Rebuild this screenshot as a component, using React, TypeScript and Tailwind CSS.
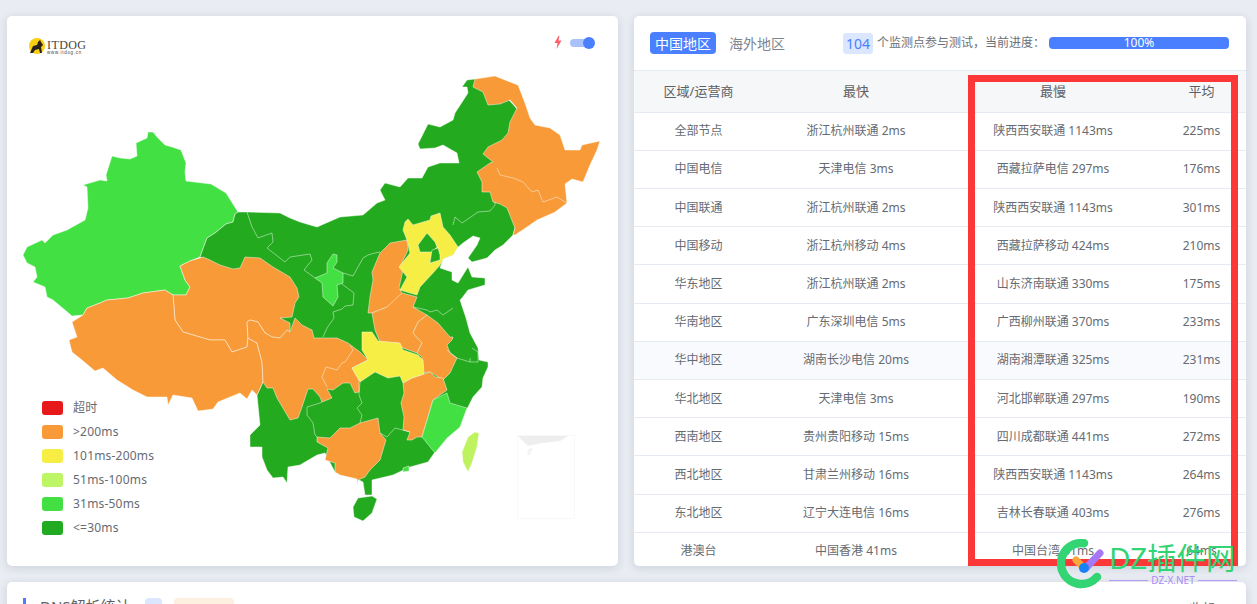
import React from 'react';

const GREEN = '#24aa1f';
const ORANGE = '#f79a37';
const YELLOW = '#f7ee45';
const LIGHT = '#43e043';

const xinjiang = '148,132 153,132 157,137 165,145 172,147 181,150 186,163 185,172 186,181 211,184 226,193 238,212 235,214 233,222 226,224 215,233 207,238 200,257 190,261 180,266 185,280 190,287 186,295 173,295 165,290 143,293 128,298 107,300 100,303 87,308 83,315 72,316 65,310 53,300 47,297 45,287 33,282 37,277 35,267 27,263 23,255 27,247 42,240 45,243 53,235 67,230 85,220 88,208 87,187 83,185 100,180 107,181 106,175 112,156 120,158 130,159 137,156 136,143 147,138';

const mainland = '238,212 247,212 280,213 290,218 300,222 317,227 340,217 363,215 377,203 385,200 380,190 385,183 400,187 408,178 422,178 428,167 440,163 459,163 457,153 443,145 435,148 420,149 418,144 428,124 440,127 453,120 455,113 468,93 467,87 462,87 467,80 475,79 500,90 518,110 515,228 513,235 503,245 495,250 487,258 472,262 468,258 477,245 480,238 473,236 463,243 457,248 453,255 443,259 440,268 452,272 452,280 458,283 468,267 472,277 485,278 485,285 468,290 462,298 460,300 466,318 470,333 478,348 479,360 488,362 488,367 483,378 482,387 473,397 468,407 465,412 460,427 447,438 435,452 428,462 410,467 393,475 372,480 372,495 365,495 363,482 355,478 335,472 325,453 317,455 300,465 288,467 287,483 283,477 273,478 267,470 262,457 262,447 250,447 250,435 260,425 257,395 263,382 270,300 200,257 207,238 215,233 226,224 233,222 235,214';

const qinghai = '180,266 190,261 203,257 210,260 220,265 233,269 240,268 245,257 260,258 273,267 290,277 297,288 299,297 295,303 292,317 280,318 290,323 290,332 287,330 280,338 272,337 265,333 258,322 250,320 247,322 248,338 247,347 232,352 225,340 210,340 183,332 175,320 173,295 186,295 190,287 185,280';

const tibet = '173,295 175,320 183,332 210,340 225,340 232,352 247,347 248,338 257,343 262,362 263,382 257,395 252,390 247,399 240,393 218,402 213,409 198,411 192,398 173,395 168,405 167,397 147,397 133,390 117,380 103,368 95,371 82,360 72,352 69,340 77,337 72,322 83,315 87,308 100,303 107,300 128,298 143,293 165,290';

const sichuan = '248,338 247,322 250,320 258,322 265,333 272,337 280,338 287,330 290,332 295,318 302,325 312,330 314,338 323,338 337,338 348,343 360,352 368,360 352,368 359,380 359,392 355,393 350,383 343,383 333,390 327,389 332,398 322,402 320,397 313,389 308,389 302,407 298,418 290,420 277,398 273,388 267,388 263,382 262,362 257,343';

const heilongjiang = '475,79 495,76 510,82 518,85 525,103 530,118 535,125 550,128 560,135 565,150 580,150 582,145 600,141 597,150 590,165 583,182 572,179 565,184 567,203 555,212 553,213 537,220 527,227 515,235 513,235 515,228 507,208 500,204 493,202 490,192 482,192 482,182 477,172 490,163 493,162 483,154 488,147 502,140 508,133 510,122 517,108 510,100 500,104 488,105 483,92 473,87';

const shanxi = '407,240 390,243 380,253 372,272 373,280 370,297 368,313 372,313 387,307 400,300 402,293 399,288 403,270 400,267 408,250';
const henan = '372,313 387,307 402,293 417,297 413,307 427,315 418,322 413,333 422,343 417,353 403,348 398,343 380,342 375,330';
const anhui = '427,315 438,323 450,337 453,337 452,340 447,345 450,353 457,358 450,373 443,380 435,375 430,372 422,373 423,367 422,357 417,353 422,343 413,333 418,322';
const jiangxi = '403,383 412,378 424,374 430,372 435,377 443,378 447,390 433,400 428,417 422,437 417,437 412,440 407,440 410,432 403,430 404,417 401,403 404,393';
const guangxi = '317,437 330,438 340,428 350,428 360,423 378,418 380,433 386,440 383,450 380,460 370,470 365,477 358,480 358,485 357,479 340,475 335,472 335,463 325,460 328,448 317,442';
const hebei = '403,230 405,222 408,219 413,225 430,220 431,216 440,213 443,227 450,235 458,247 453,255 443,259 440,265 433,273 420,287 417,295 400,290 407,277 399,267 410,253 407,240';
const hubei = '362,332 372,332 378,341 400,343 403,350 418,355 423,360 424,374 412,378 403,383 400,376 388,378 375,372 360,382 352,368 368,360 362,350';
const beijing = '418,245 427,233 435,242 437,247 432,252 420,252';
const tianjin = '430,263 440,260 440,255 438,248 432,250';
const ningxia = '315,278 327,273 327,263 333,254 337,255 337,262 333,268 343,273 343,283 337,285 338,297 333,306 323,297 322,283';
const fujian = '433,400 447,393 450,403 467,408 460,427 447,438 435,453 422,437 428,417';
const taiwan = '475,432 479,433 477,447 472,463 468,472 463,462 462,452 468,437';
const hainan = '353,507 358,498 372,496 377,499 372,513 363,521 354,517';

const borderLines = [
  '247,212 252,227 258,238 272,233 273,242 267,248 285,262 290,257 310,254 312,260 304,270 315,278',
  '342,284 354,293 353,305 345,306 342,309 333,312 334,318 327,328 323,337',
  '343,273 353,276 363,258 368,255 375,253 380,252',
  '453,225 455,217 462,223 478,212 490,211 495,205 495,202',
  '413,307 427,310 430,312 437,310 443,315 453,308',
  '360,382 359,395 362,403 357,408 362,415 360,423',
  '380,433 387,437 395,428 410,432',
  '307,407 307,415 313,423 315,435 317,437',
  '307,407 320,403 322,402',
  '472,348 478,352 478,362 470,362 470,358',
  '447,350 457,358 470,362',
  '497,168 500,175 513,178 523,182 532,192 538,190 543,202 557,197 567,203',
  '350,345 353,350 345,362 342,363 337,370 326,367 322,377 327,387',
];

const legend = [
  { label: '超时', color: 'bg-[#e8191b]' },
  { label: '>200ms', color: 'bg-[#f79a37]' },
  { label: '101ms-200ms', color: 'bg-[#f7ee45]' },
  { label: '51ms-100ms', color: 'bg-[#bef564]' },
  { label: '31ms-50ms', color: 'bg-[#43e043]' },
  { label: '<=30ms', color: 'bg-[#22aa22]' },
];

const rows = [
  ['全部节点', '浙江杭州联通 2ms', '陕西西安联通 1143ms', '225ms'],
  ['中国电信', '天津电信 3ms', '西藏拉萨电信 297ms', '176ms'],
  ['中国联通', '浙江杭州联通 2ms', '陕西西安联通 1143ms', '301ms'],
  ['中国移动', '浙江杭州移动 4ms', '西藏拉萨移动 424ms', '210ms'],
  ['华东地区', '浙江杭州联通 2ms', '山东济南联通 330ms', '175ms'],
  ['华南地区', '广东深圳电信 5ms', '广西柳州联通 370ms', '233ms'],
  ['华中地区', '湖南长沙电信 20ms', '湖南湘潭联通 325ms', '231ms'],
  ['华北地区', '天津电信 3ms', '河北邯郸联通 297ms', '190ms'],
  ['西南地区', '贵州贵阳移动 15ms', '四川成都联通 441ms', '272ms'],
  ['西北地区', '甘肃兰州移动 16ms', '陕西西安联通 1143ms', '264ms'],
  ['东北地区', '辽宁大连电信 16ms', '吉林长春联通 403ms', '276ms'],
  ['港澳台', '中国香港 41ms', '中国台湾 61ms', '64ms'],
];

const ChinaMap = () => (
  <svg viewBox="7 16 611 550" className="block w-full h-full">
    <g stroke="#ffffff" strokeOpacity="0.65" strokeWidth="0.7" strokeLinejoin="round">
      <polygon points={xinjiang} fill={LIGHT} />
      <polygon points={mainland} fill={GREEN} />
      <polygon points={qinghai} fill={ORANGE} />
      <polygon points={tibet} fill={ORANGE} />
      <polygon points={sichuan} fill={ORANGE} />
      <polygon points={heilongjiang} fill={ORANGE} />
      <polygon points={shanxi} fill={ORANGE} />
      <polygon points={henan} fill={ORANGE} />
      <polygon points={anhui} fill={ORANGE} />
      <polygon points={jiangxi} fill={ORANGE} />
      <polygon points={guangxi} fill={ORANGE} />
      <polygon points={hebei} fill={YELLOW} />
      <polygon points={beijing} fill={GREEN} />
      <polygon points={tianjin} fill={GREEN} />
      <polygon points={hubei} fill={YELLOW} />
      <polygon points={ningxia} fill={LIGHT} />
      <polygon points={fujian} fill={LIGHT} />
      <polygon points={taiwan} fill="#bef25f" />
      <polygon points={hainan} fill={GREEN} />
      <polygon points="403,468 409,466 409,471 403,472" fill={LIGHT} />
      {borderLines.map((line) => (
        <polyline key={line} points={line} fill="none" />
      ))}
    </g>
    {/* south china sea inset */}
    <rect x="517.5" y="435.5" width="57" height="83" fill="none" stroke="#f8f8f8" />
    <path d="M518 436 H568 L560 441 L542 443 L528 446 Z" fill="#eeeeee" />
    <path d="M528 449 L533 448 L530 455 L527 455 Z" fill="#f4f4f4" />
  </svg>
);

const Logo = () => (
  <div className="absolute left-[21px] top-[21px] flex items-center gap-px">
    <svg width="18" height="18" viewBox="0 0 18 18">
      <circle cx="9" cy="9" r="8" fill="#f9cf12" />
      <polygon points="2,16 5,9 9,8 10,5 12,3 13,5 15,8 13,10 14,16 12,16 11,12 7,13 5,16" fill="#2a211c" />
    </svg>
    <div className="flex flex-col pt-[3px] leading-none text-[#4a3f3a] font-['Liberation_Serif',serif]">
      <span className="text-[12px] leading-[11px] tracking-[0.4px]">ITDOG</span>
      <span className="-mt-px text-[4.5px] leading-[5px] tracking-[0.7px] font-['Liberation_Sans',sans-serif]">www.itdog.cn</span>
    </div>
  </div>
);

const Watermark = () => (
  <div className="absolute left-[1057px] top-[539px] flex items-start gap-[4px] pointer-events-none">
    <svg width="48" height="50" viewBox="1057 539 48 50" className="shrink-0">
      <path d="M1084 543.2 A20.5 20.5 0 1 0 1097 577" fill="none" stroke="#33d474" strokeWidth="8.5" strokeLinecap="round" />
      <line x1="1076" y1="560" x2="1084" y2="568" stroke="#f9a83a" strokeWidth="7" strokeLinecap="round" />
      <line x1="1100" y1="553" x2="1086" y2="568" stroke="#a678f5" strokeWidth="7" strokeLinecap="round" />
      <circle cx="1084" cy="568" r="5" fill="#1a82f7" />
    </svg>
    <div className="flex flex-col w-[128px] mt-[3px]">
      <span className="text-[29.5px] leading-[32px] whitespace-nowrap text-[#33d474]">DZ插件网</span>
      <div className="flex items-center gap-[3px] text-[#a98cf5]">
        <span className="h-px flex-1 bg-[#b79df6]" />
        <span className="text-[10px] leading-[12px]">DZ-X.NET</span>
        <span className="h-px flex-1 bg-[#b79df6]" />
      </div>
    </div>
  </div>
);

export default function App() {
  return (
    <div className="relative h-[604px] w-[1257px] overflow-hidden bg-[#e9ecf2] text-[12px] text-[#666b72] font-['Noto_Sans','Noto_Sans_CJK_SC',sans-serif]">
      <div className="h-0 shadow-[0_1px_10px_rgba(30,45,80,0.22)]" />
      <div className="pl-[7px] pt-[16px]">
        <div className="grid w-[1239px] grid-cols-[611px_612px] gap-x-[16px]">
          {/* Map */}
          <div className="relative h-[550px] rounded-[5px] bg-white shadow-[0_2px_10px_rgba(30,45,80,0.14)]">
            <ChinaMap />
            <Logo />
            <div className="absolute right-[24px] top-[20px] flex items-center gap-[8px]">
              <svg width="8" height="13" viewBox="0 0 8 13">
                <polygon points="4.5,0 0.5,7 3.5,7 2.5,13 7.5,4.5 4.5,4.5 5.5,0" fill="#fc6068" />
              </svg>
              <div className="relative h-[8px] w-[24px] rounded-full bg-[#a9c2fb]">
                <span className="absolute right-[-1px] top-[-2px] h-[12px] w-[12px] rounded-full bg-[#4a80ff]" />
              </div>
            </div>
            <div className="absolute left-[35px] top-[385px] flex flex-col gap-[10px]">
              {legend.map((item) => (
                <div key={item.label} className="flex h-[14px] items-center gap-[10px]">
                  <span className={`h-[14px] w-[21px] rounded-[3px] ${item.color}`} />
                  <span className="whitespace-nowrap text-[12px] tracking-[0.2px]">{item.label}</span>
                </div>
              ))}
            </div>
          </div>

          {/* Stats table */}
          <div className="h-[550px] overflow-hidden rounded-[5px] bg-white shadow-[0_2px_10px_rgba(30,45,80,0.14)]">
            <div className="flex h-[54px] items-center pl-[16px] pr-[17px] border-b border-[#e6ebf1] box-content">
              <span className="flex h-[22px] w-[66px] items-center justify-center rounded-[4px] bg-[#4a80ff] text-[14px] text-white">中国地区</span>
              <span className="ml-[13px] text-[14px] text-[#7d8590]">海外地区</span>
              <span className="ml-[58px] flex h-[21px] w-[30px] items-center justify-center rounded-[3px] bg-[#dbe6ff] text-[14px] text-[#4a80ff]">104</span>
              <span className="ml-[4px] whitespace-nowrap text-[#6b7178]">个监测点参与测试，当前进度：</span>
              <div className="ml-auto flex h-[12px] w-[180px] items-center justify-center rounded-[4px] bg-[#4a80ff] text-[12px] text-white">100%</div>
            </div>
            <div className="grid h-[41.7px] grid-cols-[129px_186px_208px_1fr] items-center border-b border-[#e6ebf1] bg-[#f6f7f8] text-center text-[13px] text-[#5b6066]">
              <span>区域/运营商</span>
              <span>最快</span>
              <span>最慢</span>
              <span>平均</span>
            </div>
            {rows.map((row, index) => (
              <div
                key={row[0]}
                className={`grid h-[38.2px] grid-cols-[129px_186px_208px_1fr] items-center border-b border-[#e6ebf1] text-center ${
                  index === 6 ? 'bg-[#f9fafe]' : ''
                }`}
              >
                {row.map((cell) => (
                  <span key={cell} className="whitespace-nowrap">{cell}</span>
                ))}
              </div>
            ))}
          </div>
        </div>

        {/* DNS card, cut off by the window */}
        <div className="mt-[16px] flex h-[60px] w-[1239px] items-start rounded-[5px] bg-white pl-[16px] pr-[31px] pt-[16px] shadow-[0_2px_10px_rgba(30,45,80,0.14)]">
          <span className="h-[20px] w-[3px] bg-[#4a80ff]" />
          <span className="ml-[14px] -mt-[2px] text-[15px] leading-[20px] whitespace-nowrap text-[#5b6066]">DNS解析统计</span>
          <span className="ml-[14px] h-[20px] w-[17px] rounded-[4px] bg-[#dbe6ff]" />
          <span className="ml-[12px] h-[20px] w-[60px] rounded-[4px] bg-[#fdf0e0]" />
          <span className="ml-auto text-[13px] leading-[20px]">收起</span>
        </div>
      </div>

      {/* Red annotation box drawn on top of the screenshot */}
      <div className="pointer-events-none absolute left-[968px] top-[75px] h-[491px] w-[270px] border-[7px] border-[#fb3737]" />
      <Watermark />
    </div>
  );
}
